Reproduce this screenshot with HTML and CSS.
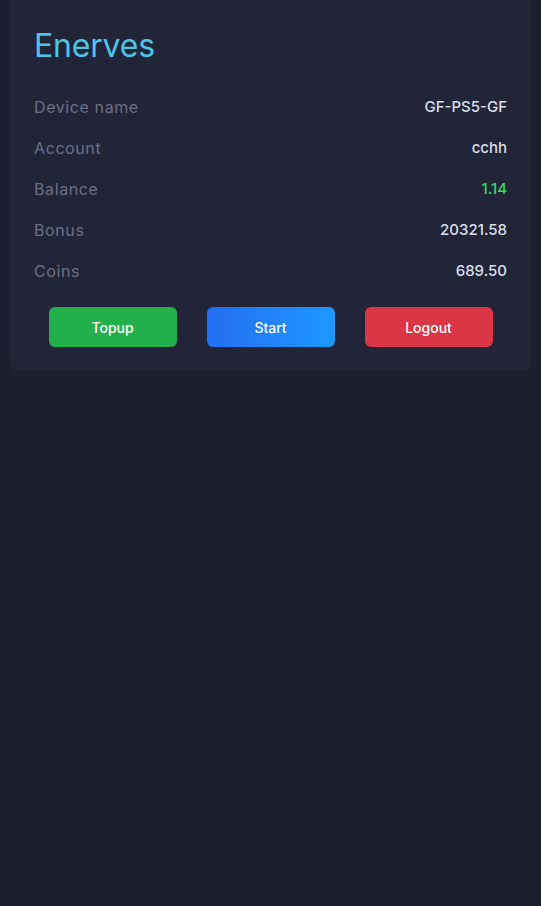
FILE: index.html
```html
<!DOCTYPE html>
<html lang="en">
<head>
<meta charset="utf-8">
<title>Enerves</title>
<link rel="stylesheet" href="styles.css">
</head>
<body>
<div class="card">
  <h1 class="title">Enerves</h1>
  <div class="rows">
    <div class="row"><span class="label">Device name</span><span class="value">GF-PS5-GF</span></div>
    <div class="row"><span class="label">Account</span><span class="value">cchh</span></div>
    <div class="row"><span class="label">Balance</span><span class="value green">1.14</span></div>
    <div class="row"><span class="label">Bonus</span><span class="value">20321.58</span></div>
    <div class="row"><span class="label">Coins</span><span class="value">689.50</span></div>
  </div>
  <div class="actions">
    <button class="btn btn-topup">Topup</button>
    <button class="btn btn-start">Start</button>
    <button class="btn btn-logout">Logout</button>
  </div>
</div>
</body>
</html>
```
FILE: styles.css
```css
html, body {
  margin: 0;
  padding: 0;
  background: #1d1e2f;
  min-height: 100%;
}
body {
  font-family: Inter, "Open Sans", sans-serif;
  height: 906px;
}
.card {
  margin: 0 10px;
  background: #222538;
  border-radius: 0 0 7px 7px;
  padding: 26px 24px 24px;
}
.title {
  margin: 0 0 20px;
  font-size: 32px;
  line-height: 40px;
  font-weight: 400;
  color: #4cc6e8;
  letter-spacing: -0.2px;
}
.rows {
  display: flex;
  flex-direction: column;
}
.row {
  height: 41px;
  display: flex;
  align-items: center;
  justify-content: space-between;
  font-size: 15px;
}
.label {
  color: #6b6f87;
  font-size: 16px;
  letter-spacing: 0.6px;
}
.value {
  color: #dcdfea;
  font-weight: 450;
}
.value.green {
  color: #3ed56a;
}
.actions {
  margin-top: 16px;
  display: flex;
  justify-content: center;
  gap: 30px;
}
.btn {
  width: 128px;
  height: 40px;
  border: 0;
  border-radius: 6px;
  color: #ffffff;
  font-family: inherit;
  font-size: 14px;
  font-weight: 500;
  padding: 0;
}
.btn-topup { background: #23b04b; }
.btn-start { background: linear-gradient(90deg, #246ef0, #1e98ff); }
.btn-logout { background: #dc3546; }
```
